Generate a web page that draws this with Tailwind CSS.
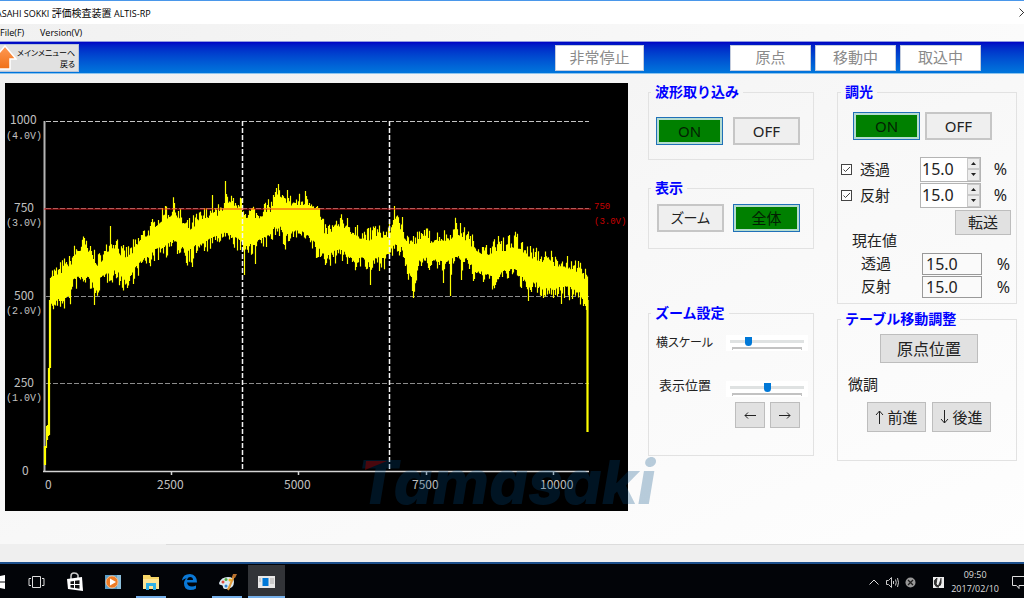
<!DOCTYPE html>
<html lang="ja">
<head>
<meta charset="utf-8">
<title>ASAHI SOKKI 評価検査装置 ALTIS-RP</title>
<script src="https://cdn.jsdelivr.net/npm/@tailwindcss/browser@4"></script>
</head>
<body class="min-h-screen flex flex-col overflow-hidden bg-[#f0f0f0] text-[#222] text-[15px] leading-none font-['Noto_Sans','Noto_Sans_CJK_JP',sans-serif]">

<header>
  <div class="h-6 border-t border-[#4a97ea] bg-white flex items-center justify-between overflow-hidden">
    <h1 class="-ml-1 whitespace-nowrap text-[9px] text-black font-['Open_Sans','Noto_Sans_CJK_JP',sans-serif]">ASAHI SOKKI <span class="text-[10px]">評価検査装置</span> ALTIS-RP</h1>
    <button aria-label="閉じる" class="-mr-1 shrink-0"><svg width="9" height="9" viewBox="0 0 9 9" stroke="#333" fill="none"><path d="M.5.5l8 8M8.500.5l-8 8"/></svg></button>
  </div>
  <nav class="h-[17px] flex items-center gap-[14px] text-[9px] text-black bg-linear-to-r from-[#f1f1f1] to-[#fbfbfb] font-['Open_Sans',sans-serif]">
    <button class="w-[26px] text-left whitespace-nowrap">File(F)</button>
    <button class="whitespace-nowrap">Version(V)</button>
  </nav>
  <div class="h-[33px] border-y border-t-[#8f9be0] border-b-[#8cc4ee] bg-linear-to-b from-[#0000c4] to-[#0076dc] flex items-center text-[15px]">
    <button class="w-[79px] h-7 bg-[#e1e1e1] border border-l-0 border-[#b9c4d8] flex items-center justify-between pr-1">
      <svg class="shrink-0" width="17" height="26" viewBox="0 0 17 26"><defs><linearGradient id="ar" x1="0" y1="0" x2="0" y2="1"><stop offset="0" stop-color="#ff9a55"/><stop offset="1" stop-color="#f07018"/></linearGradient></defs><path d="M-6 14L5 1l11 13h-6v10H-1V14z" fill="url(#ar)" stroke="#fff" stroke-width="1.500"/></svg>
      <span class="text-right text-[8px] leading-[11px] text-black whitespace-nowrap [font-feature-settings:'palt']">メインメニューへ<br>戻る</span>
    </button>
    <div class="ml-auto mr-[43px] flex gap-1 text-[#8a8a8a]">
      <button disabled class="w-[89px] h-[26px] bg-white border border-[#c4ccdc] mr-[82px]">非常停止</button>
      <button disabled class="w-[81px] h-[26px] bg-white border border-[#c4ccdc]">原点</button>
      <button disabled class="w-[81px] h-[26px] bg-white border border-[#c4ccdc]">移動中</button>
      <button disabled class="w-[81px] h-[26px] bg-white border border-[#c4ccdc]">取込中</button>
    </div>
  </div>
</header>

<main class="flex-1 flex items-start pt-[9px] pl-[5px] pr-[7px] bg-linear-to-br from-[#f0f0f0] via-[#f8f8f8] to-[#fefefe]">
  <section aria-label="波形" class="relative flex-1">
    <svg viewBox="5 83 623 428" class="block w-full bg-black">
      <g stroke="#8c8c8c" stroke-dasharray="5 2" fill="none">
        <path d="M46 121.500H589" stroke="#c4c4c4"/><path d="M46 208.500H589M46 296.500H589M46 383.500H589"/>
      </g>
      <path d="M44.500 121V471" stroke="#b4b4b4" stroke-width="2"/>
      <path d="M43 471.500H589M171.500 471v4M298.500 471v4M426.500 471v4M553.500 471v4" stroke="#d4d4d4" stroke-width="1.500" fill="none"/>
      <path id="wave" stroke="#ff0" stroke-width="1.200" fill="none"/>
      <path d="M242.500 121V471M389.500 121V471" stroke="#f4f4f4" stroke-width="1.500" stroke-dasharray="5 2"/>
      <path d="M44 209H591" stroke="#f01818" stroke-opacity=".85"/>
      <g fill="#c0c0c0" class="text-[12px] font-['Noto_Sans_CJK_JP',sans-serif]">
        <text x="10" y="124">1000</text><text x="14" y="212">750</text><text x="14" y="300">500</text><text x="14" y="387">250</text><text x="22" y="475">0</text>
        <text x="45" y="489">0</text><text x="157" y="489">2500</text><text x="284" y="489">5000</text><text x="412" y="489">7500</text><text x="540" y="489">10000</text>
      </g>
      <g fill="#c0c0c0" class="text-[10px] font-['Liberation_Mono',monospace]">
        <text x="6" y="139">(4.0V)</text><text x="6" y="226">(3.0V)</text><text x="6" y="314">(2.0V)</text><text x="6" y="401">(1.0V)</text>
      </g>
      <g fill="#c80000" class="text-[9px] font-['Liberation_Mono',monospace]">
        <text x="594" y="209">750</text><text x="594" y="224">(3.0V)</text>
      </g>
    </svg>
    <svg aria-hidden="true" width="310" height="60" viewBox="0 0 310 60" class="absolute -right-[38px] bottom-0 pointer-events-none">
      <text x="1" y="53" fill="#004b80" fill-opacity=".27" class="text-[61px] font-extrabold italic font-['Inter',sans-serif]">Tamasaki</text>
      <path d="M10 10h21L9 19z" fill="#7a0000" fill-opacity=".6"/>
    </svg>
  </section>

  <div class="w-[166px] ml-5 shrink-0">
    <fieldset class="h-[77px] border border-[#e2e2e2] pl-[7px] pr-[13px]">
      <legend class="h-[18px] leading-[18px] px-1 -ml-[5px] text-[14px] font-bold text-[#0000ff]">波形取り込み</legend>
      <div class="mt-4 flex justify-between">
        <button class="w-[67px] h-7 bg-[#008000] text-[#031f03] border border-[#2070b8] ring-2 ring-inset ring-[#b4dcd0]">ON</button>
        <button class="w-[67px] h-7 bg-[#efefef] border-2 border-[#c6c6c6]">OFF</button>
      </div>
    </fieldset>
    <fieldset class="mt-[19px] h-[70px] border border-[#e2e2e2] pl-2 pr-[13px]">
      <legend class="h-[18px] leading-[18px] px-1 -ml-1.5 text-[14px] font-bold text-[#0000ff]">表示</legend>
      <div class="mt-[7px] flex justify-between">
        <button class="w-[67px] h-7 bg-[#efefef] border-2 border-[#c6c6c6] text-[14px] [font-feature-settings:'palt']">ズーム</button>
        <button class="w-[67px] h-7 bg-[#008000] text-[#031f03] border border-[#2070b8] ring-2 ring-inset ring-[#b4dcd0]">全体</button>
      </div>
    </fieldset>
    <fieldset class="mt-[55px] h-[152px] border border-[#e2e2e2] pl-[7px] pr-[5px]">
      <legend class="h-[18px] leading-[18px] px-1 -ml-[5px] text-[14px] font-bold text-[#0000ff]">ズーム設定</legend>
      <div class="mt-[11px] h-5 flex items-center justify-between">
        <label for="scale" class="text-[12px] whitespace-nowrap [font-feature-settings:'palt']">横スケール</label>
        <span class="w-[82px] h-4 bg-white px-1 flex flex-col">
          <input id="scale" type="range" min="0" max="100" value="22" class="appearance-none w-full h-3 bg-transparent [&::-webkit-slider-runnable-track]:h-[3px] [&::-webkit-slider-runnable-track]:bg-[#dfe2e2] [&::-webkit-slider-thumb]:appearance-none [&::-webkit-slider-thumb]:w-[7px] [&::-webkit-slider-thumb]:h-[9px] [&::-webkit-slider-thumb]:-mt-[3px] [&::-webkit-slider-thumb]:bg-[#0078d7] [&::-webkit-slider-thumb]:rounded-b-sm">
          <span class="h-[3px] mx-0.5 border-t-2 border-x border-[#c2c2c2]"></span>
        </span>
      </div>
      <div class="mt-[26px] h-5 flex items-center justify-between">
        <label for="pos" class="ml-[3px] self-start text-[13px] whitespace-nowrap">表示位置</label>
        <span class="w-[82px] h-4 bg-white px-1 flex flex-col">
          <input id="pos" type="range" min="0" max="100" value="51" class="appearance-none w-full h-3 bg-transparent [&::-webkit-slider-runnable-track]:h-[3px] [&::-webkit-slider-runnable-track]:bg-[#dfe2e2] [&::-webkit-slider-thumb]:appearance-none [&::-webkit-slider-thumb]:w-[7px] [&::-webkit-slider-thumb]:h-[9px] [&::-webkit-slider-thumb]:-mt-[3px] [&::-webkit-slider-thumb]:bg-[#0078d7] [&::-webkit-slider-thumb]:rounded-b-sm">
          <span class="h-[3px] mx-0.5 border-t-2 border-x border-[#c2c2c2]"></span>
        </span>
      </div>
      <div class="mt-[3px] mr-2 flex justify-end gap-[5px]">
        <button aria-label="左へ" class="w-[30px] h-[26px] bg-[#e1e1e1] border border-[#bdbdbd] grid place-items-center"><svg width="12" height="7" viewBox="0 0 12 7" fill="none" stroke="#222"><path d="M12 3.500H1M4 .5l-3 3 3 3"/></svg></button>
        <button aria-label="右へ" class="w-[30px] h-[26px] bg-[#e1e1e1] border border-[#bdbdbd] grid place-items-center"><svg width="12" height="7" viewBox="0 0 12 7" fill="none" stroke="#222"><path d="M0 3.500h11M8 .5l3 3-3 3"/></svg></button>
      </div>
    </fieldset>
  </div>

  <div class="w-[180px] ml-[23px] shrink-0">
    <fieldset class="h-[221px] border border-[#e2e2e2] pl-[3px] pr-1.5">
      <legend class="h-[18px] leading-[18px] px-1 text-[14px] font-bold text-[#0000ff]">調光</legend>
      <div class="mt-[11px] ml-3 flex gap-[5px]">
        <button class="w-[67px] h-7 bg-[#008000] text-[#031f03] border border-[#2070b8] ring-2 ring-inset ring-[#b4dcd0]">ON</button>
        <button class="w-[67px] h-7 bg-[#efefef] border-2 border-[#c6c6c6]">OFF</button>
      </div>
      <div class="mt-4 h-[26px] flex items-center">
        <span class="w-[11px] grid">
          <input id="c1" type="checkbox" checked class="peer col-start-1 row-start-1 appearance-none size-[11px] bg-white border border-[#444]">
          <svg class="col-start-1 row-start-1 pointer-events-none invisible peer-checked:visible" width="11" height="11" viewBox="0 0 11 11" fill="none" stroke="#444"><path d="M2.500 5.500l2 2L9 3"/></svg>
        </span>
        <label for="c1" class="w-[68px] pl-2">透過</label>
        <div class="w-[61px] h-[25px] bg-white border border-[#b4b4b4] flex">
          <input aria-label="透過" type="text" value="15.0" class="w-[46px] pl-px text-[16px]">
          <span class="w-[13px] flex flex-col"><button aria-label="上げる" class="flex-1 bg-[#ececec] border border-[#c8c8c8] grid place-items-center"><svg width="5" height="3"><path d="M0 3l2.500-3L5 3z" fill="#222"/></svg></button><button aria-label="下げる" class="flex-1 bg-[#ececec] border border-[#c8c8c8] grid place-items-center"><svg width="5" height="3"><path d="M0 0l2.500 3L5 0z" fill="#222"/></svg></button></span>
        </div>
        <span class="ml-auto mr-[3px] text-[16px]">%</span>
      </div>
      <div class="h-[26px] flex items-center">
        <span class="w-[11px] grid">
          <input id="c2" type="checkbox" checked class="peer col-start-1 row-start-1 appearance-none size-[11px] bg-white border border-[#444]">
          <svg class="col-start-1 row-start-1 pointer-events-none invisible peer-checked:visible" width="11" height="11" viewBox="0 0 11 11" fill="none" stroke="#444"><path d="M2.500 5.500l2 2L9 3"/></svg>
        </span>
        <label for="c2" class="w-[68px] pl-2">反射</label>
        <div class="w-[61px] h-[25px] bg-white border border-[#b4b4b4] flex">
          <input aria-label="反射" type="text" value="15.0" class="w-[46px] pl-px text-[16px]">
          <span class="w-[13px] flex flex-col"><button aria-label="上げる" class="flex-1 bg-[#ececec] border border-[#c8c8c8] grid place-items-center"><svg width="5" height="3"><path d="M0 3l2.500-3L5 3z" fill="#222"/></svg></button><button aria-label="下げる" class="flex-1 bg-[#ececec] border border-[#c8c8c8] grid place-items-center"><svg width="5" height="3"><path d="M0 0l2.500 3L5 0z" fill="#222"/></svg></button></span>
        </div>
        <span class="ml-auto mr-[3px] text-[16px]">%</span>
      </div>
      <div class="mt-0.5 h-[38px] flex justify-between">
        <span class="ml-[11px] self-end leading-4">現在値</span>
        <button class="w-14 h-[25px] -mr-px bg-[#e1e1e1] border border-[#bdbdbd]">転送</button>
      </div>
      <div class="mt-1 h-[23px] flex items-center">
        <label for="v1" class="ml-5 w-[61px]">透過</label>
        <input id="v1" readonly value="15.0" class="w-[60px] h-[22px] pl-[3px] text-[16px] bg-[#fafafa] border border-[#999]">
        <span class="ml-auto text-[16px]">%</span>
      </div>
      <div class="h-[23px] flex items-center">
        <label for="v2" class="ml-5 w-[61px]">反射</label>
        <input id="v2" readonly value="15.0" class="w-[60px] h-[22px] pl-[3px] text-[16px] bg-[#fafafa] border border-[#999]">
        <span class="ml-auto text-[16px]">%</span>
      </div>
    </fieldset>
    <fieldset class="mt-1.5 h-[151px] border border-[#e2e2e2] pl-[3px] pr-[25px]">
      <legend class="h-[18px] leading-[18px] px-1 text-[14px] font-bold text-[#0000ff]">テーブル移動調整</legend>
      <button class="block mt-1.5 ml-[39px] w-[98px] h-[29px] bg-[#e1e1e1] border border-[#bdbdbd] text-[16px]">原点位置</button>
      <p class="mt-[13px] ml-[7px] leading-4">微調</p>
      <div class="mt-[10px] flex justify-end gap-1.5">
        <button class="w-[59px] h-[30px] bg-[#e1e1e1] border border-[#bdbdbd] flex items-center justify-center gap-[3px]"><svg width="9" height="14" viewBox="0 0 9 14" fill="none" stroke="#222"><path d="M4.500 14V1M1 5l3.500-4L8 5"/></svg>前進</button>
        <button class="w-[59px] h-[30px] bg-[#e1e1e1] border border-[#bdbdbd] flex items-center justify-center gap-[3px]"><svg width="9" height="14" viewBox="0 0 9 14" fill="none" stroke="#222"><path d="M4.500 0v13M1 9l3.500 4L8 9"/></svg>後進</button>
      </div>
    </fieldset>
  </div>
</main>

<div class="h-[18px] flex bg-[#efefef]"><span class="w-[166px]"></span><span class="flex-1 border-t border-[#dcdcdc]"></span></div>

<footer class="h-9 bg-[#020408] border-t-2 border-[#1c4f8c] flex justify-between overflow-hidden">
  <nav class="flex items-stretch pt-px">
    <button aria-label="スタート" class="w-[18px] flex items-center"><svg width="6" height="14" viewBox="0 0 6 14" fill="#fff"><path d="M0 1l5-1v6.500H0zM0 7.500h5V14l-5-1z"/></svg></button>
    <button aria-label="タスク ビュー" class="w-[38px] grid place-items-center"><svg width="18" height="12" viewBox="0 0 18 12" fill="none" stroke="#ddd"><path d="M4.500.5h8v11h-8zM3 2.500H1v7h2M14 2.500h2v7h-2"/></svg></button>
    <button aria-label="ストア" class="w-[38px] grid place-items-center"><svg width="18" height="20" viewBox="0 0 18 20"><path d="M5 7V4q0-3 3-3t4 2v3" fill="none" stroke="#ccc" stroke-width="1.500"/><path d="M1 7l15-2 1 14-15-2z" fill="#fff"/><path d="M4.500 9.500l3.500-.5v3H4.500zM9 8.800l4.500-.6V12H9zM4.500 13H8v3l-3.500-.5zM9 13h4.500v3.700L9 16z" fill="#111"/></svg></button>
    <button aria-label="メディア プレーヤー" class="w-[38px] grid place-items-center"><svg width="16" height="16" viewBox="0 0 16 16"><path d="M0 1h16v14H0z" fill="#5b9fc9"/><path d="M12 1h4v14h-4z" fill="#8dc0dc"/><circle cx="7" cy="8" r="6" fill="#ee7c25" stroke="#f5bc8c"/><path d="M5 4.500l6 3.500-6 3.500z" fill="#fff"/></svg></button>
    <button aria-label="エクスプローラー" class="w-[38px] grid place-items-center relative"><svg width="18" height="16" viewBox="0 0 18 16"><path d="M1 1h7l1 2h8v12H1z" fill="#f7d666"/><path d="M1 5h16v10H1z" fill="#ffe594"/><path d="M4 16V9h10v7h-3v-4H7v4z" fill="#31b1e6"/></svg><span class="absolute bottom-0 inset-x-1 h-0.5 bg-[#76b0ea]"></span></button>
    <button aria-label="Edge" class="w-[38px] grid place-items-center"><svg width="17" height="17" viewBox="0 0 17 17"><path d="M1 7Q2 1 9 1q7 .5 7 8.500H6q.5 4 5 4 2 0 4-1v3q-2 1.500-6 1.500-6-.5-6-6.500 0-3.500 3-5.500-3 .5-5 2.500zM6 7h6q0-3-3-3-2.500.2-3 3z" fill="#0a78d6"/></svg></button>
    <button aria-label="ペイント" class="w-[38px] grid place-items-center relative"><svg width="19" height="18" viewBox="0 0 19 18"><path d="M1 10q2-6 9-6 6 0 6 5 0 7-8 7-3 0-3-2t-2-2-2-2z" fill="#dce8f0"/><circle cx="5" cy="9" r="1.500" fill="#e24a3b"/><circle cx="8" cy="6.500" r="1.500" fill="#51ad45"/><circle cx="12" cy="7" r="1.500" fill="#f3b91c"/><circle cx="8" cy="13" r="1.500" fill="#3084d2"/><path d="M10 17l6-14" stroke="#e39a3b" stroke-width="2"/><path d="M14 4l1-3 4 0-2 4z" fill="#b8702e"/></svg><span class="absolute bottom-0 inset-x-1 h-0.5 bg-[#76b0ea]"></span></button>
    <button aria-label="ALTIS-RP" class="ml-0.5 w-[37px] bg-[#323438] grid place-items-center relative"><svg width="17" height="12" viewBox="0 0 17 12"><path d="M0 0h17v12H0z" fill="#e8e8e8"/><path d="M4.500 2h6v8h-6z" fill="#0078d7"/><path d="M1 3h2M1 5h2M12 3h4M12 5h4M12 7h4" stroke="#aaa"/></svg><span class="absolute bottom-0 inset-x-0 h-0.5 bg-[#76b0ea]"></span></button>
  </nav>
  <div class="flex items-center pt-0.5 text-[#ddd] font-['Open_Sans',sans-serif]">
    <svg class="mr-[7px]" width="10" height="6" viewBox="0 0 10 6" fill="none" stroke="#ddd"><path d="M.5 5.500L5 1l4.500 4.500"/></svg>
    <svg class="mr-[6px]" width="13" height="11" viewBox="0 0 13 11" fill="none" stroke="#ccc"><path d="M.5 3.500h2l3-3v10l-3-3h-2zM7.500 4v3M9.500 2.500q1.500 3 0 6M11.500 1q2 4.500 0 9"/></svg>
    <svg class="mr-[17px]" width="11" height="11" viewBox="0 0 11 11"><circle cx="5.500" cy="5.500" r="5" fill="#999"/><path d="M3 3l5 5M8 3L3 8" stroke="#222" stroke-width="1.300"/></svg>
    <svg class="mr-[13px]" width="11" height="11" viewBox="0 0 11 11"><path d="M0 0h11v11H0z" fill="#eee"/><path d="M4 1Q0 3 1.500 7T6 10L3 7zM8 1v5q0 3-3 3" fill="#333" stroke="#333"/></svg>
    <p class="mr-[13px] -ml-[6px] text-center text-[9px] leading-[14px] whitespace-nowrap">09:50<br>2017/02/10</p>
    <button aria-label="通知" class="-mr-0.5"><svg class="block" width="14" height="13" viewBox="0 0 14 13" fill="none" stroke="#ddd"><path d="M.5.5H14M.5.5v9h4l2.500 3v-3h7"/></svg></button>
  </div>
</footer>

<script>
// Envelope samples: x, upper edge, lower edge
const env = [[50,277,305],[58,275,300],[65,268,298],[70,267,295],[73,257,280],[78,252,277],[84,249,278],[88,255,277],[92,254,282],[95,267,290],[100,262,278],[105,256,275],[110,247,270],[117,249,272],[122,258,279],[128,256,279],[135,250,268],[142,238,260],[150,234,256],[155,226,250],[160,222,248],[165,219,246],[173,214,241],[178,218,244],[185,228,248],[190,230,250],[195,225,246],[203,219,244],[210,216,239],[218,216,236],[225,205,233],[230,210,236],[235,212,238],[240,209,241],[246,217,247],[252,216,242],[258,218,241],[264,214,238],[270,211,235],[273,203,229],[278,200,221],[284,206,239],[290,205,231],[300,205,231],[307,204,236],[313,206,241],[318,214,248],[321,230,253],[326,234,257],[335,230,251],[342,226,250],[348,230,257],[355,237,259],[362,238,258],[370,240,265],[376,236,258],[382,237,258],[388,236,254],[394,223,245],[401,230,248],[405,240,262],[409,243,274],[413,245,279],[418,242,262],[424,238,258],[430,242,260],[438,240,261],[445,240,263],[450,239,260],[455,233,258],[462,236,256],[468,243,260],[475,249,270],[485,256,274],[495,250,279],[505,250,270],[515,246,270],[520,250,275],[527,255,285],[535,259,283],[545,262,288],[555,266,290],[562,265,286],[570,269,288],[577,271,291],[583,278,298],[587,282,304]];
// Isolated peaks and dips: x -> y
const peaks = {66:262,84:238,90:246,110:226,116:241,165:206,174:203,212:195,225:181,232:201,238:205,252:208,264:204,275:192,278:184,287:190,306:196,319:208,347:218,374:228,394:206,402:217,424:230,456:223,467:234,498:236,508:236,516:237,552:257,578:261};
const dips = {94:305,127:288,186:263,192:267,244:275,255:264,284:245,316:258,325:265,370:285,413:298,443:283,450:296,461:280,473:281,495:285,528:301,541:296,561:304};
let seed = 7;
const rnd = () => (seed = (seed * 16807) % 2147483647) / 2147483647;
let d = 'M44.500 465V446M45.500 465V446M46.500 448V426M47.500 440V425M48.500 436V368M49.500 435V300M50.500 368V280M587 300V432M588 300V432';
let k = 0;
for (let x = 50; x <= 587; x++) {
  while (k < env.length - 2 && env[k + 1][0] <= x) k++;
  const a = env[k], b = env[k + 1], t = (x - a[0]) / (b[0] - a[0]);
  let top = a[1] + (b[1] - a[1]) * t + 1 - 14 * rnd() ** 2.2;
  let bot = a[2] + (b[2] - a[2]) * t - 1 + 14 * rnd() ** 2.4;
  if (peaks[x]) top = peaks[x];
  if (peaks[x - 1] || peaks[x + 1]) top -= 4;
  if (dips[x]) bot = dips[x];
  if (dips[x - 1] || dips[x + 1]) bot += 4;
  d += `M${x + .5} ${top.toFixed(1)}V${bot.toFixed(1)}`;
}
document.getElementById('wave').setAttribute('d', d);
</script>
</body>
</html>
